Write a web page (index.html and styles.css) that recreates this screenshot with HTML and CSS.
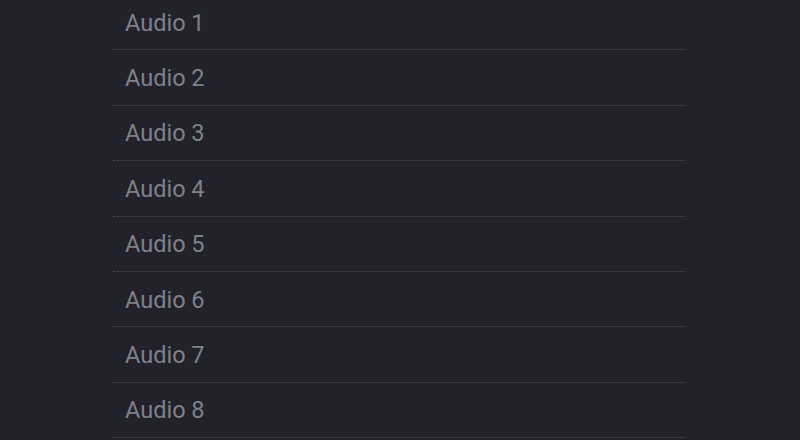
FILE: index.html
```html
<!DOCTYPE html>
<html>
<head>
<meta charset="utf-8">
<link rel="stylesheet" href="styles.css">
</head>
<body>
<ul class="list">
  <li class="item">Audio 1</li>
  <li class="item">Audio 2</li>
  <li class="item">Audio 3</li>
  <li class="item">Audio 4</li>
  <li class="item">Audio 5</li>
  <li class="item">Audio 6</li>
  <li class="item">Audio 7</li>
  <li class="item">Audio 8</li>
</ul>
</body>
</html>
```
FILE: styles.css
```css
html, body {
  margin: 0;
  padding: 0;
  background: #21222c;
  height: 100%;
  overflow: hidden;
}
.list {
  list-style: none;
  margin: -5px 0 0 113px;
  padding: 0;
  width: 572px;
}
.item {
  box-sizing: border-box;
  height: 55.4px;
  padding-left: 12px;
  padding-top: 1px;
  display: flex;
  align-items: center;
  border-bottom: 1px dotted #4a4b55;
  font-family: Roboto, "Noto Sans", sans-serif;
  font-size: 23.5px;
  color: #808188;
}
```
